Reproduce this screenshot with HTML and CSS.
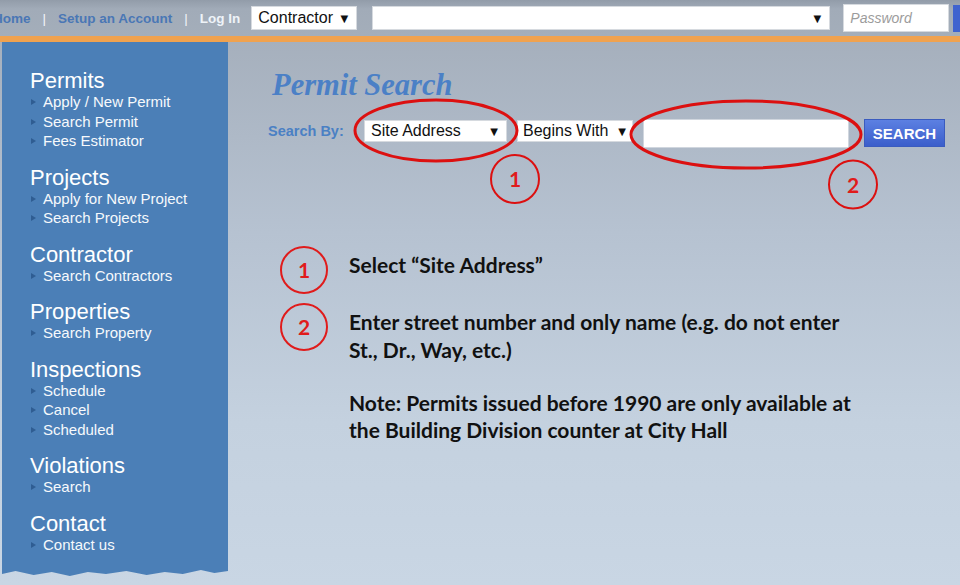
FILE: index.html
```html
<!DOCTYPE html>
<html lang="en">
<head>
  <meta charset="UTF-8" />
  <meta name="viewport" content="width=device-width, initial-scale=1" />
  <title>Permit Search</title>
  <link rel="stylesheet" href="styles.css">
</head>
<body>

  <div class="topbar">
    <nav class="toplinks">
      <a href="#">Home</a>
      <span class="sep">|</span>
      <a href="#">Setup an Account</a>
      <span class="sep">|</span>
      <a class="login" href="#">Log In</a>
    </nav>
    <div class="select type-select">Contractor <span class="arrow">▼</span></div>
    <div class="select user-select"><span></span><span class="arrow">▼</span></div>
    <div class="password">Password</div>
    <button class="go"></button>
  </div>
  <div class="stripe"></div>

  <div class="content">
    <aside class="sidebar">
      <div class="group">
        <h3>Permits</h3>
        <ul>
          <li>Apply / New Permit</li>
          <li>Search Permit</li>
          <li>Fees Estimator</li>
        </ul>
      </div>
      <div class="group">
        <h3>Projects</h3>
        <ul>
          <li>Apply for New Project</li>
          <li>Search Projects</li>
        </ul>
      </div>
      <div class="group">
        <h3>Contractor</h3>
        <ul>
          <li>Search Contractors</li>
        </ul>
      </div>
      <div class="group">
        <h3>Properties</h3>
        <ul>
          <li>Search Property</li>
        </ul>
      </div>
      <div class="group">
        <h3>Inspections</h3>
        <ul>
          <li>Schedule</li>
          <li>Cancel</li>
          <li>Scheduled</li>
        </ul>
      </div>
      <div class="group">
        <h3>Violations</h3>
        <ul>
          <li>Search</li>
        </ul>
      </div>
      <div class="group">
        <h3>Contact</h3>
        <ul>
          <li>Contact us</li>
        </ul>
      </div>
    </aside>

    <main class="main">
      <h1 class="title">Permit Search</h1>

      <div class="search-row">
        <span class="search-label">Search By:</span>
        <div class="select site">Site Address <span class="arrow">▼</span></div>
        <div class="select begins">Begins With <span class="arrow">▼</span></div>
        <div class="search-input"></div>
        <button class="search-btn">SEARCH</button>
      </div>

      <ol class="steps">
        <li><span class="num">1</span><p>Select “Site Address”</p></li>
        <li><span class="num">2</span><p>Enter street number and only name (e.g. do not enter St., Dr., Way, etc.)</p></li>
      </ol>
      <p class="note">Note: Permits issued before 1990 are only available at the Building Division counter at City Hall</p>

      <!-- red callouts drawn over the form -->
      <svg class="marks" viewBox="0 0 732 200">
        <ellipse cx="208" cy="88.5" rx="81" ry="30.5" />
        <ellipse cx="518" cy="92.5" rx="115" ry="33.5" />
        <circle cx="287" cy="137" r="24" />
        <circle cx="625" cy="142.5" r="24" />
        <text x="287" y="145">1</text>
        <text x="625" y="150.5">2</text>
      </svg>
    </main>
  </div>

</body>
</html>
```

FILE: styles.css
```css
body {
  margin: 0;
  width: 960px;
  height: 585px;
  overflow: hidden;
  font-family: "Liberation Sans", Arial, sans-serif;
  background-color: #c8d5e3;
}

/* top login bar */
.topbar {
  height: 36px;
  display: flex;
  align-items: center;
  white-space: nowrap;
  overflow: hidden;
  background: linear-gradient(#929ca9, #a1abb8 25%, #a4aeba);
}

.toplinks {
  display: flex;
  gap: 12px;
  margin-left: -7px;
  font-size: 13.5px;
  font-weight: bold;
}

.toplinks a {
  color: #4a77b5;
  text-decoration: none;
}

.toplinks .sep {
  color: #f2f5f9;
  font-weight: normal;
}

.toplinks .login {
  color: #eef3f8;
}

.select {
  height: 24px;
  box-sizing: border-box;
  display: flex;
  align-items: center;
  justify-content: space-between;
  padding: 0 8px 0 6px;
  background: white;
  border: 1px solid #d6dadf;
  font-size: 16px;
  color: #111;
  flex-shrink: 0;
}

.arrow {
  font-family: "DejaVu Sans", sans-serif;
  font-size: 10px;
}

.type-select {
  width: 106px;
  margin-left: 11px;
}

.user-select {
  width: 458px;
  margin-left: 15px;
}

.password {
  width: 106px;
  height: 28px;
  box-sizing: border-box;
  margin-left: 13px;
  padding-left: 6px;
  display: flex;
  align-items: center;
  background: white;
  border: 1px solid #d6dadf;
  font-size: 14px;
  font-style: italic;
  color: #9c9c9c;
  flex-shrink: 0;
}

.go {
  width: 20px;
  height: 27px;
  margin-left: 4px;
  border: none;
  background: #3f63cf;
  flex-shrink: 0;
}

.stripe {
  height: 6px;
  background-color: #f0a24f;
}

/* page body */
.content {
  display: flex;
  height: 543px;
  background: linear-gradient(#a6b0bd, #b6c2d1 35%, #c4d1df 70%, #c9d6e4);
}

.sidebar {
  width: 226px;
  height: 536px;
  margin-left: 2px;
  padding: 28px 0 0 28px;
  box-sizing: border-box;
  flex-shrink: 0;
  background-color: #4b7fb7;
  clip-path: polygon(0 0, 100% 0, 100% calc(100% - 7px), 94% calc(100% - 5px), 88% calc(100% - 8px),
    80% calc(100% - 4px), 72% calc(100% - 6px), 64% calc(100% - 3px), 55% calc(100% - 7px),
    46% calc(100% - 4px), 38% calc(100% - 6px), 30% calc(100% - 2px), 22% calc(100% - 6px),
    14% calc(100% - 3px), 6% calc(100% - 7px), 0 calc(100% - 4px));
}

.group {
  margin-bottom: 16px;
}

.group h3 {
  margin: 0;
  font-size: 22px;
  line-height: 22px;
  font-weight: normal;
  color: white;
}

.group ul {
  list-style: none;
  margin: 0;
  padding: 0;
}

.group li {
  position: relative;
  padding-left: 13px;
  font-size: 15px;
  line-height: 19.5px;
  color: #f6f9fc;
}

.group li::before {
  content: "";
  position: absolute;
  left: 1px;
  top: 7px;
  border-left: 5px solid #2f5d92;
  border-top: 3.5px solid transparent;
  border-bottom: 3.5px solid transparent;
}

.main {
  flex: 1;
  position: relative;
  padding: 26px 0 0 40px;
}

.title {
  margin: 0 0 0 4px;
  font-family: "Liberation Serif", serif;
  font-size: 30.5px;
  line-height: 34px;
  font-weight: bold;
  font-style: italic;
  color: #4b80c6;
}

.search-row {
  display: flex;
  align-items: flex-start;
  margin-top: 17px;
}

.search-label {
  width: 96px;
  margin-top: 1px;
  line-height: 22px;
  font-size: 14.5px;
  font-weight: bold;
  color: #4a80c4;
}

.search-row .select {
  height: 22px;
  margin-top: 1px;
}

.site {
  width: 143px;
}

.begins {
  width: 116px;
  margin-left: 10px;
  padding: 0 6px 0 5px;
}

.search-input {
  width: 206px;
  height: 29px;
  margin-left: 10px;
  box-sizing: border-box;
  background: white;
  border: 1px solid #d0d6de;
}

.search-btn {
  width: 81px;
  height: 28px;
  margin-left: 15px;
  border: 1px solid #3a5bbf;
  background: linear-gradient(#5c80e2, #3b5ecb);
  color: white;
  font-family: "Liberation Sans", Arial, sans-serif;
  font-size: 15px;
  font-weight: bold;
  padding: 0;
}

/* instructions */
.steps {
  list-style: none;
  margin: 98px 0 0 12px;
  padding: 0;
  font-family: Lato, sans-serif;
  font-size: 21px;
  line-height: 27.5px;
  font-weight: bold;
  color: #111;
}

.steps li {
  display: flex;
  gap: 21px;
  margin-bottom: 9px;
}

.num {
  width: 48px;
  height: 48px;
  flex-shrink: 0;
  box-sizing: border-box;
  display: flex;
  align-items: center;
  justify-content: center;
  border: 2px solid #e01b1b;
  border-radius: 50%;
  color: #e01b1b;
}

.steps p {
  width: 512px;
  margin: 5px 0 0;
}

.note {
  width: 512px;
  margin: 25.5px 0 0 81px;
  font-family: Lato, sans-serif;
  font-size: 21px;
  line-height: 27.5px;
  font-weight: bold;
  color: #111;
}

.marks {
  position: absolute;
  left: 0;
  top: 0;
  width: 732px;
  height: 200px;
  pointer-events: none;
}

.marks ellipse {
  fill: none;
  stroke: #dc1010;
  stroke-width: 3;
}

.marks circle {
  fill: none;
  stroke: #dc1010;
  stroke-width: 2;
}

.marks text {
  fill: #e01b1b;
  font-family: Lato, sans-serif;
  font-size: 21px;
  font-weight: bold;
  text-anchor: middle;
}
```
